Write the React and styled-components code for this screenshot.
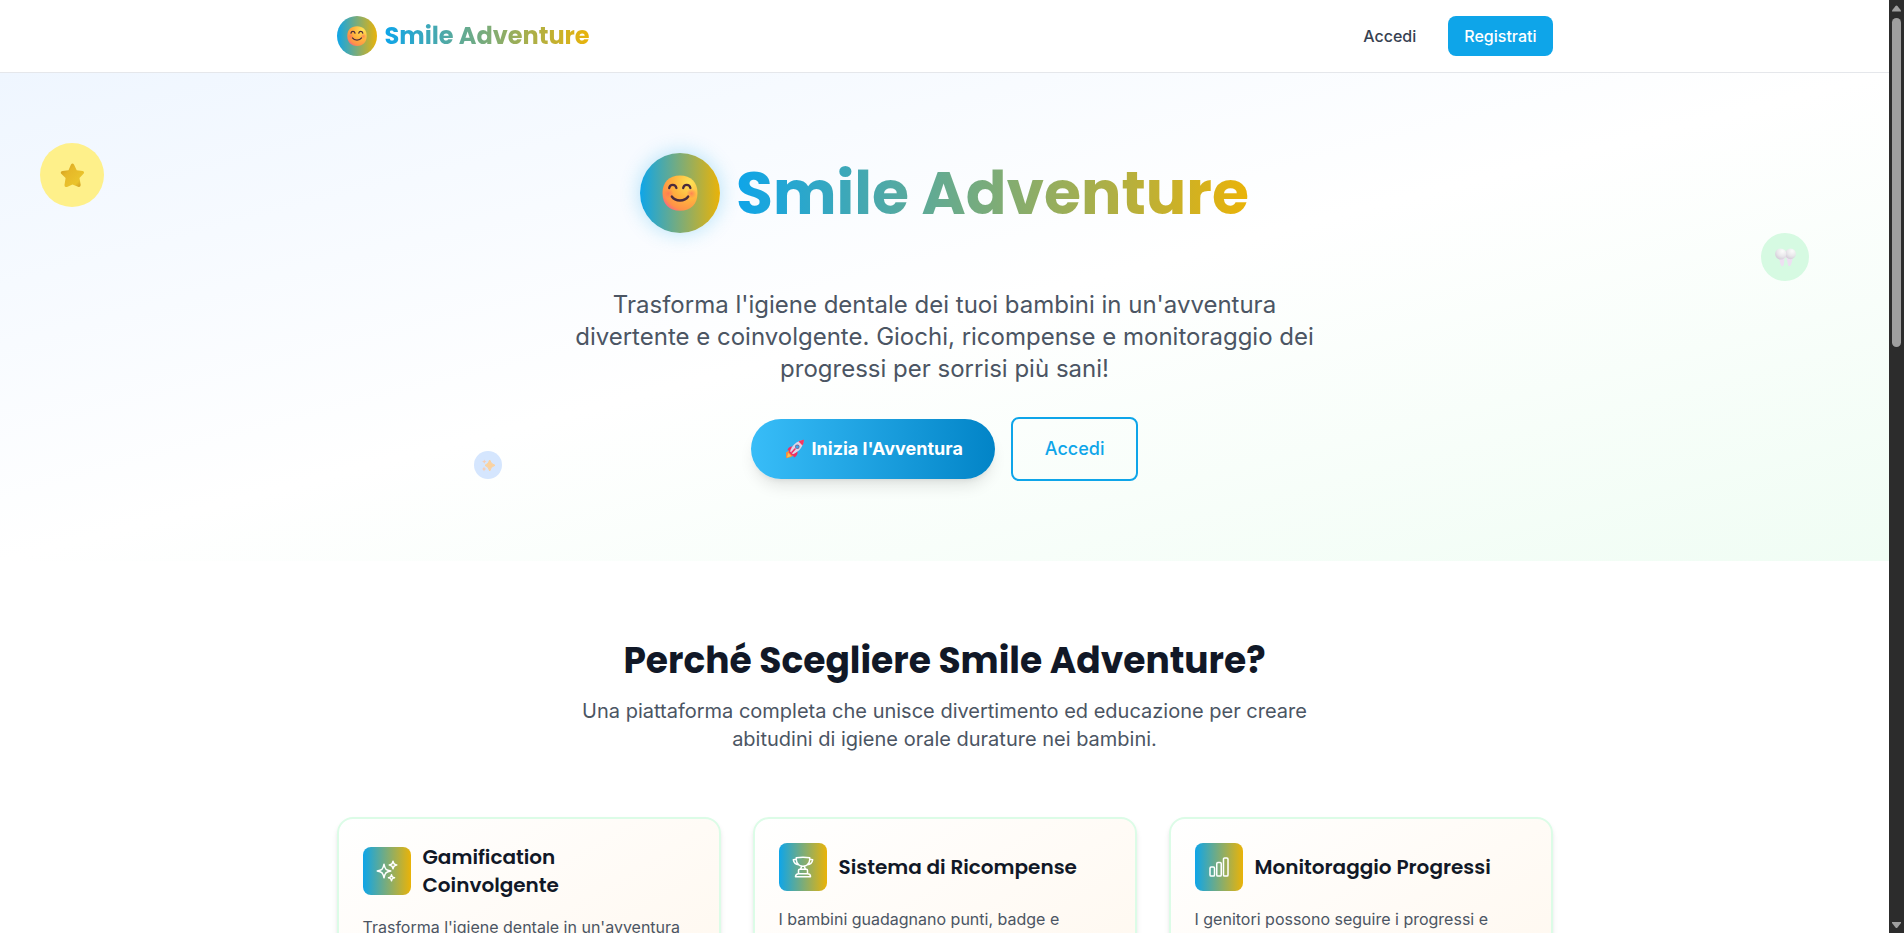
import React from "react";
import styled, { createGlobalStyle, css } from "styled-components";
import { HiOutlineSparkles, HiOutlineTrophy, HiOutlineChartBar } from "react-icons/hi2";

const bodyFont = `Inter, "Liberation Sans", sans-serif`;
const displayFont = `Poppins, Inter, "Liberation Sans", sans-serif`;
const brandGradient = "linear-gradient(to right, #0ea5e9, #eab308)";

const GlobalStyle = createGlobalStyle`
  *, *::before, *::after { box-sizing: border-box; }
  body { margin: 0; background: #fff; font-family: ${bodyFont}; font-size: 16px; line-height: 24px; color: #111827; }
  h1, h2, h3, p { margin: 0; }
  button { font-family: inherit; cursor: pointer; }
`;

const Shell = styled.div`
  display: flex;
  height: 100vh;
  overflow: hidden;
`;

const Page = styled.div`
  flex: 1;
  min-width: 0;
  overflow: hidden;
`;

const Container = styled.div`
  max-width: 1280px;
  margin: 0 auto;
  padding: 0 32px;
`;

const Header = styled.header`
  background: #fff;
  border-bottom: 1px solid #e5e7eb;
`;

const HeaderRow = styled(Container)`
  display: flex;
  align-items: center;
  justify-content: space-between;
  padding-top: 16px;
  padding-bottom: 16px;
`;

const Brand = styled.a`
  display: flex;
  align-items: center;
  gap: 8px;
  text-decoration: none;
`;

const LogoBadge = styled.span`
  display: flex;
  flex: none;
  align-items: center;
  justify-content: center;
  width: ${(p) => p.$size}px;
  height: ${(p) => p.$size}px;
  border-radius: 50%;
  background: ${brandGradient};
  box-shadow: ${(p) => (p.$glow ? "0 0 20px rgba(14, 165, 233, 0.3)" : "none")};
`;

const gradientText = css`
  font-family: ${displayFont};
  font-weight: 700;
  color: transparent;
  background: ${brandGradient};
  -webkit-background-clip: text;
  background-clip: text;
`;

const BrandName = styled.span`
  ${gradientText}
  font-size: 24px;
  line-height: 32px;
`;

const Nav = styled.nav`
  display: flex;
  gap: 16px;
`;

const NavButton = styled.button`
  height: 40px;
  padding: 0 16px;
  border: 0;
  border-radius: 8px;
  font-size: 16px;
  font-weight: 500;
  color: ${(p) => (p.$filled ? "#fff" : "#374151")};
  background: ${(p) => (p.$filled ? "#0ea5e9" : "transparent")};
`;

const Hero = styled.section`
  position: relative;
  padding: 80px 0;
  background: linear-gradient(to bottom right, #eff6ff, #fff, #f0fdf4);
`;

const HeroContent = styled(Container)`
  display: flex;
  flex-direction: column;
  align-items: center;
  text-align: center;
`;

const HeroBrand = styled.div`
  display: flex;
  align-items: center;
  gap: 16px;
  margin-bottom: 56px;
`;

const HeroTitle = styled.h1`
  ${gradientText}
  font-size: 60px;
  line-height: 80px;
`;

const HeroText = styled.p`
  max-width: 768px;
  margin-bottom: 32px;
  font-size: 24px;
  line-height: 32px;
  color: #4b5563;
`;

const Actions = styled.div`
  display: flex;
  align-items: center;
  gap: 16px;
`;

const ActionButton = styled.button`
  display: flex;
  align-items: center;
  gap: 5px;
  padding: 16px 32px;
  font-size: 18px;
  line-height: 28px;
`;

const PrimaryAction = styled(ActionButton)`
  border: 0;
  border-radius: 30px;
  font-weight: 700;
  color: #fff;
  background: linear-gradient(to right, #38bdf8, #0284c7);
  box-shadow: 0 10px 15px -3px rgba(0, 0, 0, 0.1), 0 4px 6px -4px rgba(0, 0, 0, 0.1);
`;

const OutlineAction = styled(ActionButton)`
  border: 2px solid #0ea5e9;
  border-radius: 8px;
  font-weight: 500;
  color: #0ea5e9;
  background: transparent;
`;

const Bubble = styled.div`
  position: absolute;
  display: flex;
  align-items: center;
  justify-content: center;
  border-radius: 50%;
`;

const StarBubble = styled(Bubble)`
  top: 70px;
  left: 40px;
  width: 64px;
  height: 64px;
  background: #fef08a;
`;

const ToothBubble = styled(Bubble)`
  top: 160px;
  right: 80px;
  width: 48px;
  height: 48px;
  background: #d6fae2;
`;

const SparkleBubble = styled(Bubble)`
  bottom: 82px;
  left: 25%;
  width: 28px;
  height: 28px;
  margin-left: 2px;
  background: #d5e6fe;
`;

const Features = styled.section`
  padding: 80px 0;
  background: #fff;
`;

const SectionHead = styled.div`
  margin-bottom: 64px;
  text-align: center;
`;

const SectionTitle = styled.h2`
  margin-bottom: 16px;
  font-family: ${displayFont};
  font-size: 36px;
  font-weight: 700;
  line-height: 40px;
`;

const SectionText = styled.p`
  max-width: 768px;
  margin: 0 auto;
  font-size: 20px;
  line-height: 28px;
  color: #4b5563;
`;

const CardGrid = styled.div`
  display: grid;
  grid-template-columns: repeat(3, 1fr);
  gap: 32px;
`;

const Card = styled.article`
  padding: 24px;
  border: 2px solid #dcfce7;
  border-radius: 16px;
  background: linear-gradient(to bottom right, #fff, #fff7ed);
  box-shadow: 0 4px 6px -1px rgba(0, 0, 0, 0.1), 0 2px 4px -2px rgba(0, 0, 0, 0.1);
`;

const CardHead = styled.div`
  display: flex;
  align-items: center;
  gap: 12px;
  margin-bottom: 16px;
`;

const CardIcon = styled.span`
  display: flex;
  flex: none;
  align-items: center;
  justify-content: center;
  width: 48px;
  height: 48px;
  border-radius: 8px;
  color: #fff;
  background: ${brandGradient};
`;

const CardTitle = styled.h3`
  font-family: ${displayFont};
  font-size: 20px;
  font-weight: 600;
  line-height: 28px;
  white-space: pre-line;
`;

const CardText = styled.p`
  min-height: 96px;
  color: #4b5563;
`;

const ScrollRail = styled.div`
  display: flex;
  flex: none;
  flex-direction: column;
  align-items: center;
  width: 15px;
  padding: 5px 0;
  background: #2c2c2c;
`;

const ScrollThumb = styled.div`
  width: 9px;
  height: 35.6%;
  margin: 6px 0 auto;
  border-radius: 5px;
  background: #9f9f9f;
`;

function ScrollArrow({ down }) {
  return (
    <svg width="9" height="7" viewBox="0 0 9 7" aria-hidden="true">
      <path d={down ? "M0 1h9v1L5.5 6.500q-1 1-2 0L0 2z" : "M0 6.500h9v-1L5.500 1q-1-1-2 0L0 5.500z"} fill="#9f9f9f" />
    </svg>
  );
}

function SmileIcon({ size, id }) {
  return (
    <svg width={size} height={size} viewBox="0 0 36 36" aria-hidden="true">
      <defs>
        <radialGradient id={`${id}-face`} cx="0.78" cy="0.2" r="0.95">
          <stop offset="0" stopColor="#ffe356" />
          <stop offset="0.5" stopColor="#ffb43e" />
          <stop offset="0.85" stopColor="#ff9148" />
          <stop offset="1" stopColor="#f4648a" />
        </radialGradient>
        <radialGradient id={`${id}-cheek`}>
          <stop offset="0" stopColor="#ff7256" stopOpacity="0.75" />
          <stop offset="1" stopColor="#ff7256" stopOpacity="0" />
        </radialGradient>
      </defs>
      <path d="M18 0.500C29 0.500 35.500 7 35.500 18S29 35.800 18 35.800 0.500 29 0.500 18 7 0.500 18 0.500z" fill={`url(#${id}-face)`} />
      <circle cx="6.500" cy="18.500" r="5" fill={`url(#${id}-cheek)`} />
      <circle cx="29.500" cy="18.500" r="5" fill={`url(#${id}-cheek)`} />
      <g fill="none" stroke="#4a2b3d" strokeWidth="2.300" strokeLinecap="round">
        <path d="M7.200 13c.8-4.200 6.200-4.200 7.200 0M21.200 13c.8-4.200 6.200-4.200 7.200 0" />
        <path d="M9.800 21.500c3.500 5.300 12.900 5.300 16.400 0" />
      </g>
    </svg>
  );
}

function StarIcon() {
  return (
    <svg width="25" height="25" viewBox="0 0 25 25" aria-hidden="true">
      <defs>
        <linearGradient id="star-fill" x1="0" y1="0" x2="1" y2="1">
          <stop offset="0" stopColor="#c9921c" />
          <stop offset="0.35" stopColor="#e6b828" />
          <stop offset="0.75" stopColor="#eac42c" />
          <stop offset="1" stopColor="#c28a20" />
        </linearGradient>
      </defs>
      <path d="M11 1.500q1.500-2 3 0l2.700 5.700 6 .8q2 .7 1 2.500L19.500 15l1.200 7q-.3 2.500-2.700 1.800L12.500 21.500 7 24q-2.600.5-2.500-2L5.600 15 1 10.500Q.2 8.500 2.500 8l6-.8z" fill="url(#star-fill)" />
    </svg>
  );
}

function ToothIcon() {
  return (
    <svg width="21" height="19" viewBox="0 0 21 19" aria-hidden="true">
      <defs>
        <radialGradient id="tooth-crown" cx="0.65" cy="0.25" r="0.75">
          <stop offset="0" stopColor="#fbfbfb" />
          <stop offset="0.6" stopColor="#e9e8eb" />
          <stop offset="1" stopColor="#d6cfda" />
        </radialGradient>
      </defs>
      <path d="M4 8h5.700L9 16q-.7 3.200-2.500 2Q4.500 15 4 8zM11.200 8h6.500q-.4 7-2.400 9.800-1.800 1.400-2.500-1.800z" fill="#ede0f2" />
      <path d="M8 3h5v7H8z" fill="#e6e2ea" />
      <circle cx="15.500" cy="5.800" r="5.400" fill="url(#tooth-crown)" />
      <circle cx="5.700" cy="6" r="5.600" fill="url(#tooth-crown)" />
    </svg>
  );
}

function TwinkleIcon() {
  return (
    <svg width="13" height="13" viewBox="0 0 13 13" aria-hidden="true">
      <path d="M7.700 1Q8.500 5 13 6.300 8.500 7.500 7.700 12 6.700 7.500 3 6.300 6.700 5 7.700 1z" fill="#fad2a0" stroke="#fad2a0" />
      <path d="M2.300.5 3 2l1.600.6L3 3.300l-.7 1.500-.7-1.500L0 2.600 1.600 2zM2 7.500l.7 1.700 1.700.7-1.700.8L2 12.500l-.7-1.800L0 9.900l1.300-.7z" fill="#f7cdb5" />
    </svg>
  );
}

function RocketIcon() {
  return (
    <svg width="24" height="20" viewBox="-2 0 24 20" aria-hidden="true">
      <path d="M1 13.500 5 11l4.500 4.500L6 18l-4.800 1.300z" fill="#ff8b38" />
      <path d="M2 18.500 3.200 14l3 3z" fill="#ffc34d" />
      <path d="M8 7.500Q3.500 7 2.500 11l3.300 1.500zM12.500 12.500q.5 4-3.500 6l-1.500-3.800z" fill="#ef2f63" />
      <path d="M5 12.500C7 6.500 11 2 18.500 1c0 7-4.500 11.500-10.700 14.300z" fill="#dfd4e6" />
      <path d="M13.500 2.500Q16 1 19 .8q0 3-1.500 5.800z" fill="#f43863" />
      <path d="m4.700 12 3.600 3.700-1 1.100L3.600 13z" fill="#e62d70" />
      <circle cx="12.300" cy="7.800" r="2.300" fill="#766b9b" />
      <circle cx="12.300" cy="7.800" r="1.400" fill="#39a8f0" />
      <path d="M7 13.300 10 10" stroke="#ef2f63" strokeWidth="1.600" strokeLinecap="round" />
    </svg>
  );
}

const features = [
  {
    Icon: HiOutlineSparkles,
    title: "Gamification\nCoinvolgente",
    text: "Trasforma l'igiene dentale in un'avventura",
  },
  {
    Icon: HiOutlineTrophy,
    title: "Sistema di Ricompense",
    text: "I bambini guadagnano punti, badge e",
  },
  {
    Icon: HiOutlineChartBar,
    title: "Monitoraggio Progressi",
    text: "I genitori possono seguire i progressi e",
  },
];

export default function App() {
  return (
    <Shell>
      <GlobalStyle />
      <Page>
        <Header>
          <HeaderRow>
            <Brand href="#">
              <LogoBadge $size={40}>
                <SmileIcon size={20} id="nav-smile" />
              </LogoBadge>
              <BrandName>Smile Adventure</BrandName>
            </Brand>
            <Nav>
              <NavButton type="button">Accedi</NavButton>
              <NavButton type="button" $filled>Registrati</NavButton>
            </Nav>
          </HeaderRow>
        </Header>
        <main>
          <Hero>
            <HeroContent>
              <HeroBrand>
                <LogoBadge $size={80} $glow>
                  <SmileIcon size={36} id="hero-smile" />
                </LogoBadge>
                <HeroTitle>Smile Adventure</HeroTitle>
              </HeroBrand>
              <HeroText>
                Trasforma l'igiene dentale dei tuoi bambini in un'avventura divertente e coinvolgente.
                Giochi, ricompense e monitoraggio dei progressi per sorrisi più sani!
              </HeroText>
              <Actions>
                <PrimaryAction type="button">
                  <RocketIcon />
                  Inizia l'Avventura
                </PrimaryAction>
                <OutlineAction type="button">Accedi</OutlineAction>
              </Actions>
            </HeroContent>
            <StarBubble><StarIcon /></StarBubble>
            <ToothBubble><ToothIcon /></ToothBubble>
            <SparkleBubble><TwinkleIcon /></SparkleBubble>
          </Hero>
          <Features>
            <Container>
              <SectionHead>
                <SectionTitle>Perché Scegliere Smile Adventure?</SectionTitle>
                <SectionText>
                  Una piattaforma completa che unisce divertimento ed educazione per creare abitudini di
                  igiene orale durature nei bambini.
                </SectionText>
              </SectionHead>
              <CardGrid>
                {features.map(({ Icon, title, text }) => (
                  <Card key={title}>
                    <CardHead>
                      <CardIcon><Icon size={24} /></CardIcon>
                      <CardTitle>{title}</CardTitle>
                    </CardHead>
                    <CardText>{text}</CardText>
                  </Card>
                ))}
              </CardGrid>
            </Container>
          </Features>
        </main>
      </Page>
      <ScrollRail aria-hidden="true">
        <ScrollArrow />
        <ScrollThumb />
        <ScrollArrow down />
      </ScrollRail>
    </Shell>
  );
}
